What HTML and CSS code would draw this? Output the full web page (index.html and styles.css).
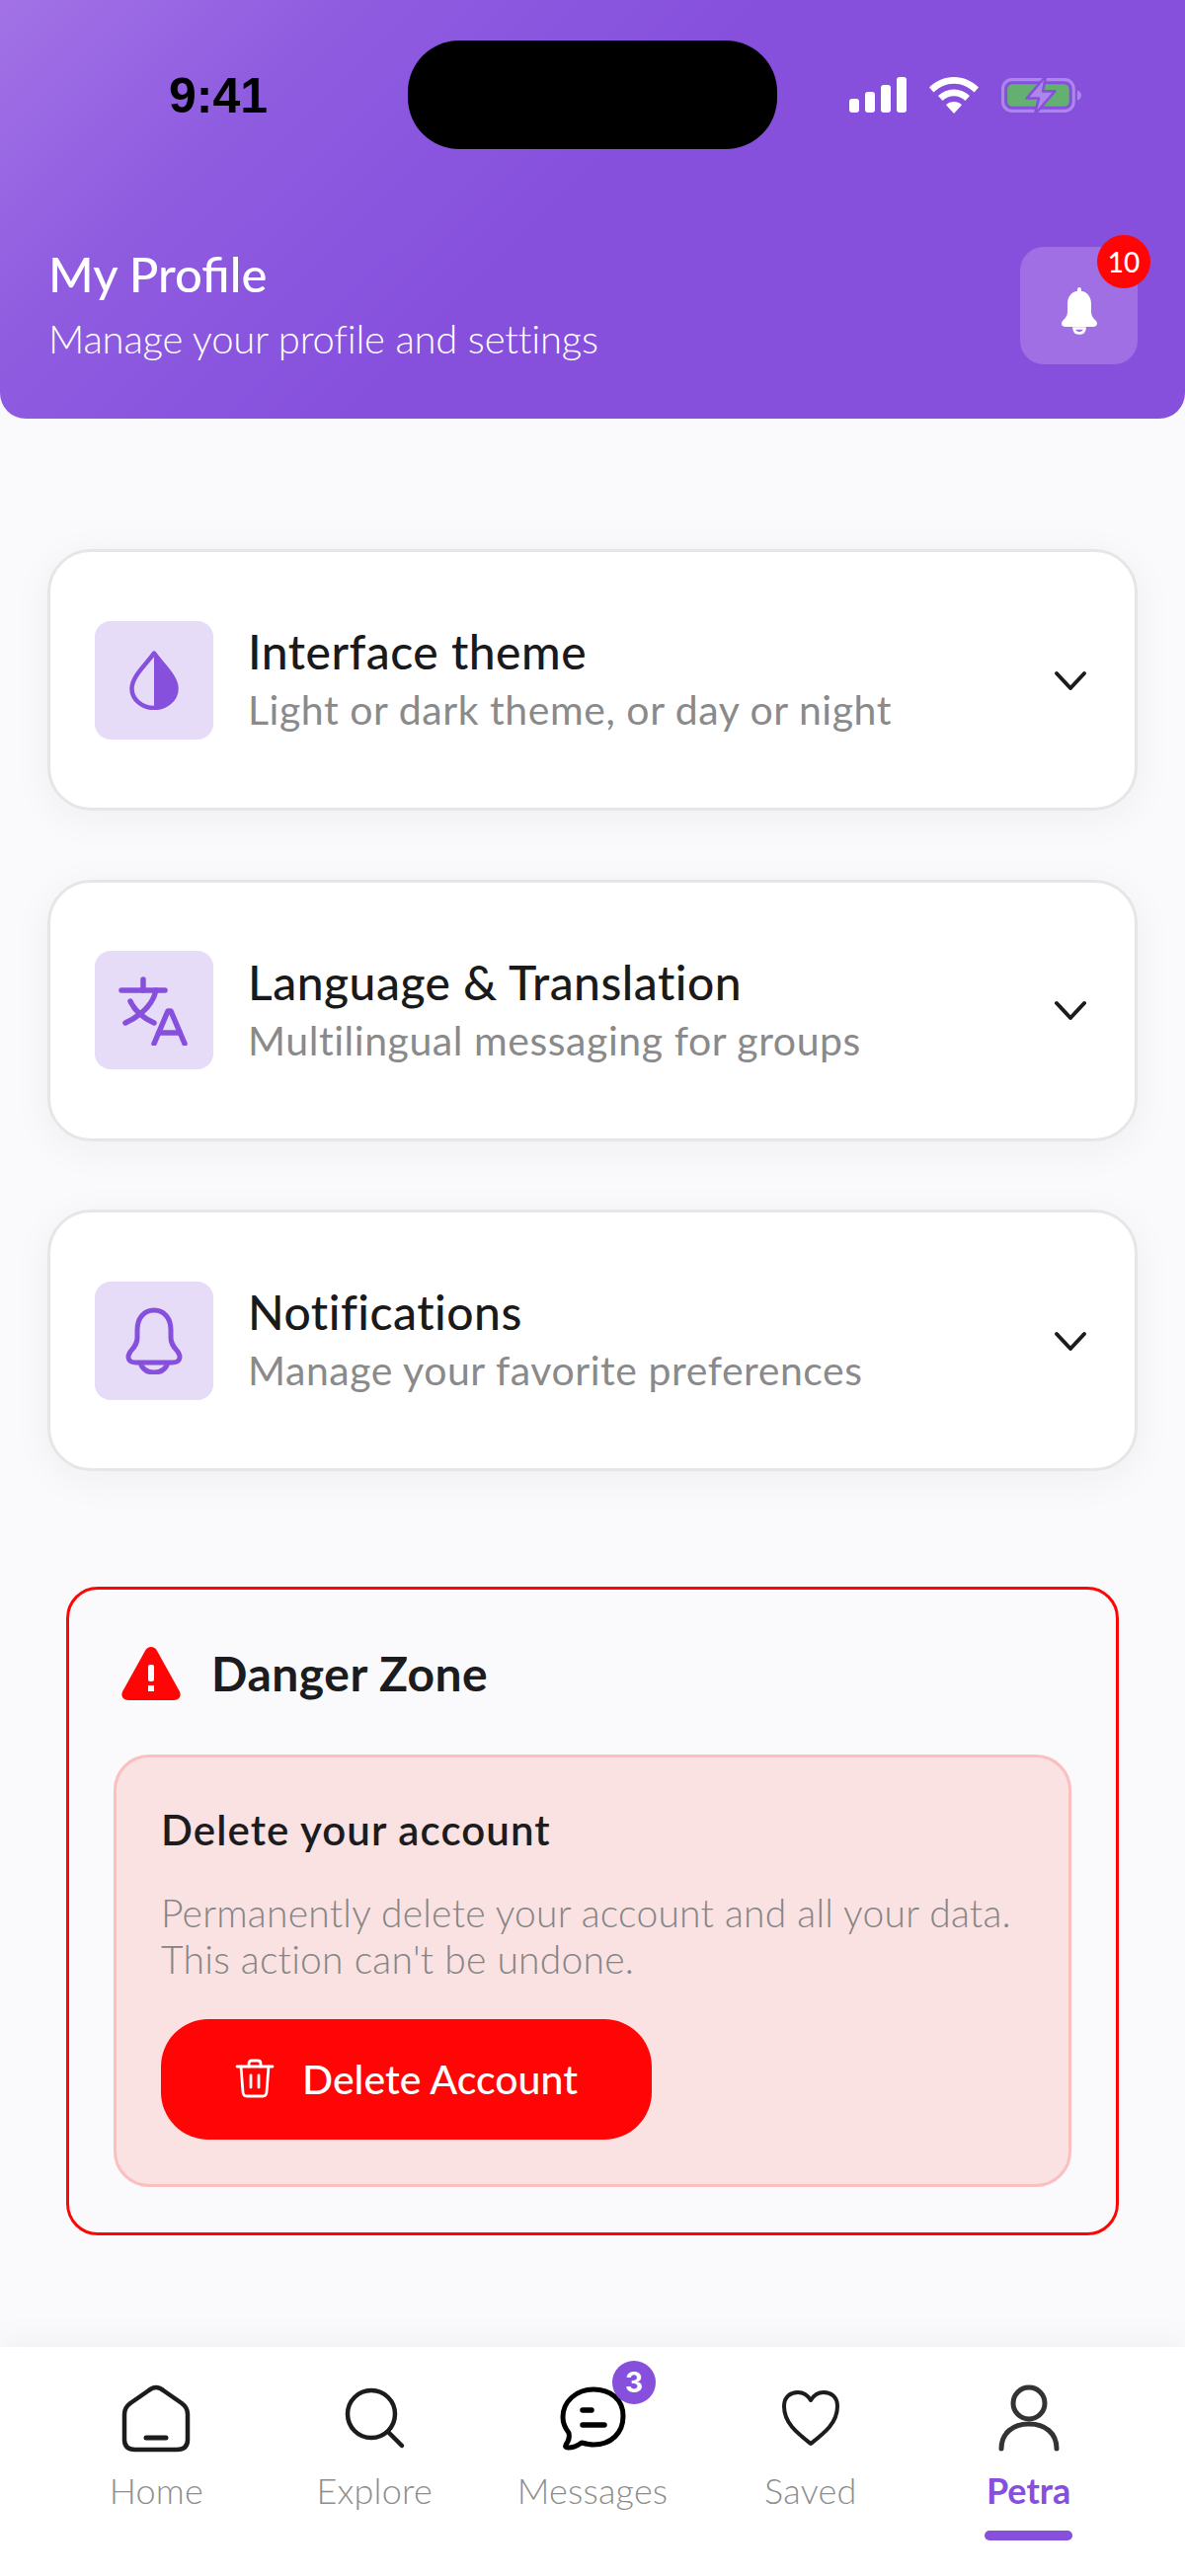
FILE: index.html
```html
<!DOCTYPE html>
<html lang="en">
<head>
<meta charset="utf-8">
<title>My Profile</title>
<link rel="stylesheet" href="styles.css">
</head>
<body>
<div class="app">
  <header class="header">
    <div class="status">
      <span class="time">9:41</span>
      <span class="island"></span>
      <span class="status-icons">
        <svg class="signal" viewBox="0 0 58 36"><rect x="0" y="22" width="10" height="14" rx="3"/><rect x="16" y="15" width="10" height="21" rx="3"/><rect x="32" y="8" width="10" height="28" rx="3"/><rect x="48" y="0" width="10" height="36" rx="3"/></svg>
        <svg class="wifi" viewBox="0 0 50 37"><path d="M25 0C15.500 0 7 3.700 0 10.500l4.500 5C10.500 9.800 17.500 6.800 25 6.800s14.500 3 20.500 8.700l4.500-5C43 3.700 34.500 0 25 0z"/><path d="M25 12.500c-6 0-11.500 2.300-16 6.600l4.500 5c3.200-3 7.200-4.800 11.500-4.800s8.300 1.800 11.500 4.800l4.500-5c-4.500-4.300-10-6.600-16-6.600z"/><path d="M25 25c-3 0-5.700 1.100-8 3.200L25 37l8-8.800C30.700 26.100 28 25 25 25z"/></svg>
        <svg class="battery" viewBox="0 0 80 40"><rect x="1.500" y="4.500" width="70" height="31" rx="9" fill="none" stroke="#ad86ea" stroke-width="3"/><rect x="6" y="9" width="61" height="22" rx="5" fill="#63b070"/><path d="M75 15c3 1 4 3 4 5s-1 4-4 5z" fill="#ad86ea"/><path d="M44 1 25 23h12l-4 16 20-23H41z" fill="#ad86ea" stroke="#8650dd" stroke-width="2.500" stroke-linejoin="round"/></svg>
      </span>
    </div>
    <div class="head-row">
      <div>
        <h1 class="head-title">My Profile</h1>
        <p class="head-sub">Manage your profile and settings</p>
      </div>
      <div class="bell-box">
        <svg class="bell-icon" viewBox="0 0 38 48"><path d="M19 0c1.300 0 2 1 2 2.300v1.400c6.500 1.100 10 6.300 10 13v7.300c0 4.500 1.500 6.500 4.500 9.500 2.500 2.500 2 6.500-2.500 6.500H5c-4.500 0-5-4-2.500-6.500C5.500 30.500 7 28.500 7 24v-7.300c0-6.700 3.500-11.900 10-13V2.300C17 1 17.700 0 19 0z" fill="#fff"/><path d="M13.500 41.500c.3 3 2.500 5 5.500 5s5.200-2 5.500-5z" fill="none" stroke="#fff" stroke-width="2.600"/></svg>
        <span class="bell-badge">10</span>
      </div>
    </div>
  </header>

  <main class="main">
    <section class="card">
      <div class="icon-box">
        <svg class="ic" viewBox="0 0 60 60"><path d="M30 2.500C22 14 7.500 26 7.500 38.500 7.500 49.500 18 58 30 58s22.500-8.500 22.500-19.500C52.500 26 38 14 30 2.500z" fill="none" stroke="#8650dd" stroke-width="4.500" stroke-linejoin="round"/><path d="M30 2.500C38 14 52.500 26 52.500 38.500 52.500 49.500 42 58 30 58z" fill="#8650dd"/></svg>
      </div>
      <div class="card-text">
        <h2 class="card-title">Interface theme</h2>
        <p class="card-sub">Light or dark theme, or day or night</p>
      </div>
      <svg class="chev" viewBox="0 0 34 22"><path d="M3 3l14 15L31 3" fill="none" stroke="#1c1c1e" stroke-width="4" stroke-linecap="round" stroke-linejoin="round"/></svg>
    </section>

    <section class="card">
      <div class="icon-box">
        <svg class="ic ic-lang" viewBox="0 0 72 72"><g fill="none" stroke="#8650dd" stroke-width="5.500" stroke-linecap="round" stroke-linejoin="round"><path d="M3 16h44"/><path d="M25 5v11"/><path d="M38 16c-3 13-14 25-31 33"/><path d="M12 27c4 9 13 17 24 22"/><path d="M36 70l14-33h3l14 33"/><path d="M41 59h21"/></g></svg>
      </div>
      <div class="card-text">
        <h2 class="card-title">Language &amp; Translation</h2>
        <p class="card-sub">Multilingual messaging for groups</p>
      </div>
      <svg class="chev" viewBox="0 0 34 22"><path d="M3 3l14 15L31 3" fill="none" stroke="#1c1c1e" stroke-width="4" stroke-linecap="round" stroke-linejoin="round"/></svg>
    </section>

    <section class="card">
      <div class="icon-box">
        <svg class="ic ic-bell" viewBox="0 0 64 68"><g fill="none" stroke="#8650dd" stroke-width="5" stroke-linejoin="round"><path d="M32 3C21 3 15 12 15 23v8c0 6-3 9-7 14-4 6-2 11 6 11h36c8 0 10-5 6-11-4-5-7-8-7-14v-8C49 12 43 3 32 3z"/><path d="M18 56c2 7 7 10 14 10s12-3 14-10"/></g></svg>
      </div>
      <div class="card-text">
        <h2 class="card-title">Notifications</h2>
        <p class="card-sub">Manage your favorite preferences</p>
      </div>
      <svg class="chev" viewBox="0 0 34 22"><path d="M3 3l14 15L31 3" fill="none" stroke="#1c1c1e" stroke-width="4" stroke-linecap="round" stroke-linejoin="round"/></svg>
    </section>

    <section class="danger">
      <div class="danger-head">
        <svg class="warn" viewBox="0 0 60 54"><path d="M30 0c2.500 0 4.500 1.300 5.800 3.600l23 41.500C61 49.500 58.500 54 53 54H7c-5.500 0-8-4.500-5.800-8.900l23-41.500C25.500 1.300 27.500 0 30 0z" fill="#ff0505"/><rect x="27" y="18" width="6" height="17" rx="2" fill="#fbfbfd"/><rect x="27" y="39" width="6" height="6" fill="#fbfbfd"/></svg>
        <h2 class="danger-title">Danger Zone</h2>
      </div>
      <div class="danger-box">
        <h3 class="danger-sub">Delete your account</h3>
        <p class="danger-text">Permanently delete your account and all your data.<br>This action can't be undone.</p>
        <button class="del-btn" type="button">
          <svg class="trash" viewBox="0 0 40 40"><g fill="none" stroke="#fff" stroke-width="2.800" stroke-linecap="round" stroke-linejoin="round"><path d="M2 8h36"/><path d="M14 8V5c0-2 1-3 3-3h6c2 0 3 1 3 3v3"/><path d="M6 8l2 26c.2 2.500 1.500 4 4 4h16c2.500 0 3.800-1.500 4-4l2-26"/><path d="M16 17v12M24 17v12"/></g></svg>
          <span>Delete Account</span>
        </button>
      </div>
    </section>
  </main>

  <nav class="nav">
    <div class="tab">
      <svg class="tab-ic" viewBox="0 0 72 72"><g fill="none" stroke="#1c1c1e" stroke-width="4.500" stroke-linecap="round" stroke-linejoin="round"><path d="M36 5c-3 0-5 1-8 3.500L10 21c-4 3-6 6-6 11v26c0 7 4 10 11 10h42c7 0 11-3 11-10V32c0-5-2-8-6-11L44 8.500C41 6 39 5 36 5z"/><path d="M26 56h20" stroke-width="5"/></g></svg>
      <span class="tab-label">Home</span>
    </div>
    <div class="tab">
      <svg class="tab-ic" viewBox="0 0 72 72"><g fill="none" stroke="#1c1c1e" stroke-width="4.500" stroke-linecap="round"><circle cx="33" cy="32" r="24"/><path d="M50 50l14 14"/></g></svg>
      <span class="tab-label">Explore</span>
    </div>
    <div class="tab">
      <span class="tab-ic-wrap">
        <svg class="tab-ic" viewBox="0 0 72 72"><g fill="none" stroke="#000" stroke-width="5" stroke-linecap="round" stroke-linejoin="round"><path d="M37 7C20 7 6 19 6 35c0 6 2 11 6 16 1 4 0 8-3 12-1 2 0 3 2 3 6 0 10-2 14-5 4 1 8 2 12 2 18 0 30-12 30-29S54 7 37 7z"/><path d="M26 28h9" stroke-width="5.500"/><path d="M26 43h22" stroke-width="5.500"/></g></svg>
        <span class="msg-badge">3</span>
      </span>
      <span class="tab-label">Messages</span>
    </div>
    <div class="tab">
      <svg class="tab-ic" viewBox="0 0 72 72"><path d="M36 62C22 51 9 41 9 24 9 14 16 10 23 10c6 0 10 3 13 8 3-5 7-8 13-8 7 0 14 4 14 14 0 17-13 27-27 38z" fill="none" stroke="#1c1c1e" stroke-width="4" stroke-linejoin="round"/></svg>
      <span class="tab-label">Saved</span>
    </div>
    <div class="tab tab-active">
      <svg class="tab-ic" viewBox="0 0 72 72"><g fill="none" stroke="#333" stroke-width="5" stroke-linecap="round"><circle cx="36" cy="21" r="16"/><path d="M8 67c0-16 12-25 28-25s28 9 28 25"/></g></svg>
      <span class="tab-label">Petra</span>
      <span class="tab-bar"></span>
    </div>
  </nav>
</div>
</body>
</html>
```

FILE: styles.css
```css
* { box-sizing: border-box; }
html, body { margin: 0; padding: 0; }
body { background: #fafafc; font-family: "Lato", "Inter", sans-serif; color: #1c1c1e; }
h1, h2, h3, p { margin: 0; font-weight: inherit; }
.app { width: 1200px; height: 2609px; display: flex; flex-direction: column; overflow: hidden; }

/* Header */
.header {
  height: 424px;
  flex: none;
  background: linear-gradient(135deg, #a272e6 0%, #8f5ce0 22%, #8650dd 48%, #8650dd 100%);
  border-radius: 0 0 26px 26px;
  padding: 41px 48px 0 49px;
  color: #fff;
}
.status { display: flex; align-items: center; height: 110px; }
.time { width: 364px; padding-left: 122px; padding-top: 2px; font: 700 50px "Liberation Sans", sans-serif; color: #000; }
.island { width: 374px; height: 110px; background: #000; border-radius: 52px; flex: none; }
.status-icons { display: flex; align-items: center; margin-left: 73px; gap: 23px; }
.signal { width: 58px; height: 36px; fill: #fff; }
.wifi { width: 50px; height: 37px; fill: #fff; }
.battery { width: 82px; height: 41px; }

.head-row { display: flex; justify-content: space-between; align-items: center; margin-top: 99px; }
.head-title { font-size: 49px; font-weight: 500; line-height: 60px; margin-top: -6px; }
.head-sub { font-size: 40px; font-weight: 300; line-height: 46px; margin-top: 13px; letter-spacing: -0.2px; }
.bell-box {
  position: relative;
  width: 119px;
  height: 119px;
  border-radius: 24px;
  background: #a06fe3;
  display: flex;
  align-items: center;
  justify-content: center;
}
.bell-icon { width: 38px; height: 48px; margin-top: 11px; }
.bell-badge {
  position: absolute;
  right: -13px;
  top: -12px;
  width: 54px;
  height: 54px;
  border-radius: 50%;
  background: #ff0505;
  color: #fff;
  font-size: 28px;
  font-weight: 500;
  display: flex;
  align-items: center;
  justify-content: center;
}

/* Main */
.main { flex: 1; padding: 132px 48px 0; display: flex; flex-direction: column; }
.card {
  height: 265px;
  margin-bottom: 69.5px;
  background: #fff;
  border: 3px solid #e6e6e8;
  border-radius: 44px;
  box-shadow: 0 8px 40px rgba(30, 30, 60, 0.05);
  padding: 0 48px 0 45px;
  display: flex;
  align-items: center;
}
.icon-box {
  width: 120px;
  height: 120px;
  flex: none;
  background: #e6dcf8;
  border-radius: 16px;
  display: flex;
  align-items: center;
  justify-content: center;
}
.ic { width: 60px; height: 60px; }
.ic-lang { width: 72px; height: 72px; }
.ic-bell { width: 64px; height: 68px; }
.card-text { flex: 1; margin-left: 35px; }
.card-title { font-size: 48px; font-weight: 500; line-height: 56px; color: #1a1a1a; letter-spacing: 0.5px; margin-top: -2px; }
.card-sub { font-size: 41px; font-weight: 400; line-height: 48px; color: #8a8a8a; margin-top: 7px; letter-spacing: 0.55px; }
.chev { width: 34px; height: 22px; flex: none; margin-top: 2px; }

/* Danger zone */
.danger {
  margin: 47.5px 19px 0;
  height: 657px;
  border: 3px solid #ff0505;
  border-radius: 32px;
  padding: 57px 45px 0;
}
.danger-head { display: flex; align-items: center; gap: 31px; padding-left: 8px; }
.warn { width: 60px; height: 54px; flex: none; }
.danger-title { font-size: 48px; font-weight: 700; line-height: 56px; color: #1c1c1e; letter-spacing: 0.5px; }
.danger-box {
  margin-top: 54px;
  height: 438px;
  background: #fae1e2;
  border: 3px solid #fbbfc0;
  border-radius: 36px;
  padding: 48px 45px 0;
}
.danger-sub { font-size: 42px; font-weight: 600; line-height: 50px; color: #1c1c1e; letter-spacing: 1.1px; }
.danger-text { font-size: 39px; font-weight: 300; line-height: 47px; color: #858585; margin-top: 36px; letter-spacing: 0.25px; }
.del-btn {
  margin-top: 37px;
  width: 497px;
  height: 122px;
  border: 0;
  border-radius: 48px;
  background: #ff0505;
  color: #fff;
  font: 500 41px "Lato", sans-serif;
  display: flex;
  align-items: center;
  padding: 0 0 2px 75px;
  gap: 28px;
}
.trash { width: 40px; height: 40px; flex: none; }

/* Bottom nav */
.nav {
  flex: none;
  height: 232px;
  background: #fff;
  padding: 36px 48px 0;
  display: grid;
  grid-template-columns: repeat(5, 1fr);
  box-shadow: 0 -8px 30px rgba(30, 30, 60, 0.04);
}
.tab { display: flex; flex-direction: column; align-items: center; color: #8e8e8e; position: relative; }
.tab-ic { width: 72px; height: 72px; display: block; }
.tab-ic-wrap { position: relative; display: block; }
.msg-badge {
  position: absolute;
  right: -28px;
  top: -22px;
  width: 44px;
  height: 44px;
  border-radius: 50%;
  background: #8650dd;
  color: #fff;
  font: 700 28px "Inter", sans-serif;
  display: flex;
  align-items: center;
  justify-content: center;
}
.tab-label { font-size: 36px; font-weight: 300; line-height: 44px; margin-top: 15px; letter-spacing: 0.2px; }
.tab-active .tab-label { color: #8650dd; font-weight: 700; letter-spacing: 0; }
.tab-bar { width: 89px; height: 10px; border-radius: 5px; background: #8650dd; margin-top: 19px; }
```
